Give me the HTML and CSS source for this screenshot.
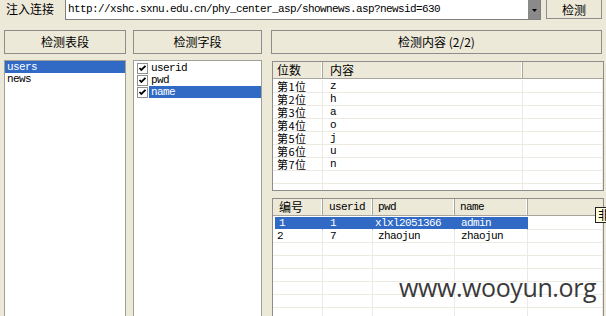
FILE: index.html
```html
<!DOCTYPE html>
<html>
<head>
<meta charset="utf-8">
<link rel="stylesheet" href="styles.css">
</head>
<body>
<div class="app">
  <div class="toprow">
    <span class="label">注入连接</span>
    <div class="combo">
      <div class="url">http://xshc.sxnu.edu.cn/phy_center_asp/shownews.asp?newsid=630</div>
      <div class="drop"><svg width="5" height="3" viewBox="0 0 5 3"><path d="M0 0H5L2.5 3Z" fill="#000"/></svg></div>
    </div>
    <div class="btn go">检测</div>
  </div>
  <div class="main">
    <div class="col col-left">
      <div class="btn">检测表段</div>
      <div class="list">
        <div class="item sel mono">users</div>
        <div class="item mono">news</div>
      </div>
    </div>
    <div class="col col-mid">
      <div class="btn">检测字段</div>
      <div class="list">
        <div class="citem"><span class="cb"><svg width="11" height="11" viewBox="0 0 11 11"><rect x="0.5" y="0.5" width="10" height="10" fill="#fff" stroke="#8f8f8f"/><path d="M2.5 5L4.3 7L8.5 2.8" fill="none" stroke="#000" stroke-width="1.8"/></svg></span><span class="ctext mono">userid</span></div>
        <div class="citem"><span class="cb"><svg width="11" height="11" viewBox="0 0 11 11"><rect x="0.5" y="0.5" width="10" height="10" fill="#fff" stroke="#8f8f8f"/><path d="M2.5 5L4.3 7L8.5 2.8" fill="none" stroke="#000" stroke-width="1.8"/></svg></span><span class="ctext mono">pwd</span></div>
        <div class="citem"><span class="cb"><svg width="11" height="11" viewBox="0 0 11 11"><rect x="0.5" y="0.5" width="10" height="10" fill="#fff" stroke="#8f8f8f"/><path d="M2.5 5L4.3 7L8.5 2.8" fill="none" stroke="#000" stroke-width="1.8"/></svg></span><span class="ctext mono sel">name</span></div>
      </div>
    </div>
    <div class="col col-right">
      <div class="btn">检测内容 (2/2)</div>
      <div class="grid g1">
        <div class="row head"><div class="hc p4">位数</div><div class="hc p7">内容</div><div class="hc last"></div></div>
        <div class="row"><div class="c cjk p4">第1位</div><div class="c mono p7">z</div><div class="c"></div></div>
        <div class="row"><div class="c cjk p4">第2位</div><div class="c mono p7">h</div><div class="c"></div></div>
        <div class="row"><div class="c cjk p4">第3位</div><div class="c mono p7">a</div><div class="c"></div></div>
        <div class="row"><div class="c cjk p4">第4位</div><div class="c mono p7">o</div><div class="c"></div></div>
        <div class="row"><div class="c cjk p4">第5位</div><div class="c mono p7">j</div><div class="c"></div></div>
        <div class="row"><div class="c cjk p4">第6位</div><div class="c mono p7">u</div><div class="c"></div></div>
        <div class="row"><div class="c cjk p4">第7位</div><div class="c mono p7">n</div><div class="c"></div></div>
        <div class="row"><div class="c"></div><div class="c"></div><div class="c"></div></div>
        <div class="row"><div class="c"></div><div class="c"></div><div class="c"></div></div>
      </div>
      <div class="grid g2">
        <div class="row head"><div class="hc p6">编号</div><div class="hc mono p6">userid</div><div class="hc mono p5">pwd</div><div class="hc mono p5">name</div><div class="hc last"></div></div>
        <div class="row selrow"><div class="c mono p4 hl">1</div><div class="c mono p7 hl">1</div><div class="c mono p2 hl">xlxl2051366</div><div class="c mono p6 hl">admin</div><div class="c"></div></div>
        <div class="row"><div class="c mono p4">2</div><div class="c mono p7">7</div><div class="c mono p5">zhaojun</div><div class="c mono p6">zhaojun</div><div class="c"></div></div>
        <div class="row"><div class="c"></div><div class="c"></div><div class="c"></div><div class="c"></div><div class="c"></div></div>
        <div class="row"><div class="c"></div><div class="c"></div><div class="c"></div><div class="c"></div><div class="c"></div></div>
        <div class="row"><div class="c"></div><div class="c"></div><div class="c"></div><div class="c"></div><div class="c"></div></div>
        <div class="row"><div class="c"></div><div class="c"></div><div class="c"></div><div class="c"></div><div class="c"></div></div>
        <div class="row"><div class="c"></div><div class="c"></div><div class="c"></div><div class="c"></div><div class="c"></div></div>
        <div class="row"><div class="c"></div><div class="c"></div><div class="c"></div><div class="c"></div><div class="c"></div></div>
        <div class="row"><div class="c"></div><div class="c"></div><div class="c"></div><div class="c"></div><div class="c"></div></div>
      </div>
    </div>
  </div>
  <div class="tooltip">非</div>
  <div class="watermark">www.wooyun.org</div>
</div>
</body>
</html>
```

FILE: styles.css
```css
html, body {
  margin: 0;
  padding: 0;
  background: #ECE9D8;
  overflow: hidden;
}
.app {
  position: relative;
  width: 606px;
  height: 316px;
  overflow: hidden;
  font-family: "Noto Sans CJK SC", sans-serif;
  font-size: 12px;
  color: #000;
}
.mono {
  font-family: "Liberation Mono", "Noto Sans CJK SC", monospace;
  font-size: 11px;
  letter-spacing: -0.6px;
}
.cjk {
  font-family: "Noto Sans CJK SC", sans-serif;
  font-size: 11px;
  letter-spacing: 0.4px;
}
.toprow {
  display: flex;
  align-items: flex-start;
  margin-top: -2px;
  height: 21px;
}
.label {
  width: 59px;
  padding-left: 6px;
  line-height: 21px;
  height: 21px;
}
.combo {
  display: flex;
  width: 476px;
  height: 22px;
  box-sizing: border-box;
  border: 1px solid #7f7f7f;
  background: #fff;
}
.url {
  flex: 1;
  font-family: "Liberation Mono", monospace;
  font-size: 11px;
  letter-spacing: -0.6px;
  line-height: 20px;
  padding-left: 2px;
  white-space: nowrap;
  overflow: hidden;
}
.drop {
  width: 12px;
  background: #8a8a8a;
  display: flex;
  align-items: center;
  justify-content: center;
}
.drop svg { margin-top: 3px; }
.btn {
  box-sizing: border-box;
  border: 1px solid #8c8c8c;
  background: #ECE9D8;
  display: flex;
  align-items: center;
  justify-content: center;
  height: 24px;
  line-height: 14px;
}
.go {
  width: 56px;
  height: 21px;
  margin-left: 5px;
  padding-top: 2px;
}
.main {
  display: flex;
  align-items: flex-start;
  margin-top: 11px;
}
.col {
  display: flex;
  flex-direction: column;
}
.col-left { margin-left: 4px; width: 122px; }
.col-mid { margin-left: 7px; width: 129px; }
.col-right { margin-left: 9px; width: 333px; }
.col-right .btn { width: 331px; }
.list {
  margin-top: 6px;
  height: 300px;
  box-sizing: border-box;
  border: 1px solid #a09f98;
  background: #fff;
}
.item {
  height: 12px;
  line-height: 12px;
  padding-left: 2px;
  white-space: nowrap;
}
.sel {
  background: #316AC5;
  color: #fff;
}
.citem {
  display: flex;
  align-items: center;
  height: 12px;
}
.citem:first-child { margin-top: 1px; }
.cb {
  width: 11px;
  height: 11px;
  margin-left: 3px;
  margin-right: 1px;
  display: flex;
}
.ctext {
  flex: 1;
  height: 12px;
  line-height: 12px;
  padding-left: 2px;
}
.grid {
  margin-left: 1px;
  width: 332px;
  box-sizing: border-box;
  border: 1px solid #8d8d8d;
  background: #fff;
  overflow: hidden;
}
.g1 {
  margin-top: 7px;
  height: 130px;
}
.g2 {
  margin-top: 7px;
  height: 140px;
}
.row {
  display: grid;
  height: 13px;
}
.g1 .row { grid-template-columns: 50px 200px 1fr; }
.g2 .row { grid-template-columns: 50px 50px 82px 73px 1fr; }
.row.head {
  height: 17px;
  background: #ECE9D8;
  border-bottom: 1px solid #a7a59c;
  box-sizing: border-box;
}
.hc {
  box-sizing: border-box;
  border-right: 1px solid #a7a59c;
  box-shadow: inset -1px 0 0 #fff;
  line-height: 16px;
  white-space: nowrap;
}
.hc.last { border-right: none; box-shadow: none; }
.c {
  box-sizing: border-box;
  border-right: 1px solid #EDEBE1;
  border-bottom: 1px solid #EDEBE1;
  line-height: 12px;
  height: 13px;
  white-space: nowrap;
  overflow: hidden;
}
.g1 .row:nth-child(2) { margin-top: 1px; }
.g2 .row:nth-child(2) { margin-top: 1px; }
.hl {
  background: #316AC5;
  color: #fff;
  border-right-color: #316AC5;
  border-bottom-color: #fff;
}
.selrow .hl:first-child { margin-left: 2px; }
.p2 { padding-left: 2px; }
.p4 { padding-left: 4px; }
.p5 { padding-left: 5px; }
.p6 { padding-left: 6px; }
.p7 { padding-left: 7px; }
.tooltip {
  position: absolute;
  left: 595px;
  top: 207px;
  width: 18px;
  height: 16px;
  box-sizing: border-box;
  border: 1px solid #222;
  background: #FFFFE1;
  line-height: 14px;
  padding-left: 2px;
  font-size: 12px;
  white-space: nowrap;
}
.watermark {
  position: absolute;
  left: 399px;
  top: 271px;
  font-family: "Open Sans", sans-serif;
  font-size: 25px;
  line-height: 32px;
  color: #3a3a3a;
  letter-spacing: -0.4px;
}
```
